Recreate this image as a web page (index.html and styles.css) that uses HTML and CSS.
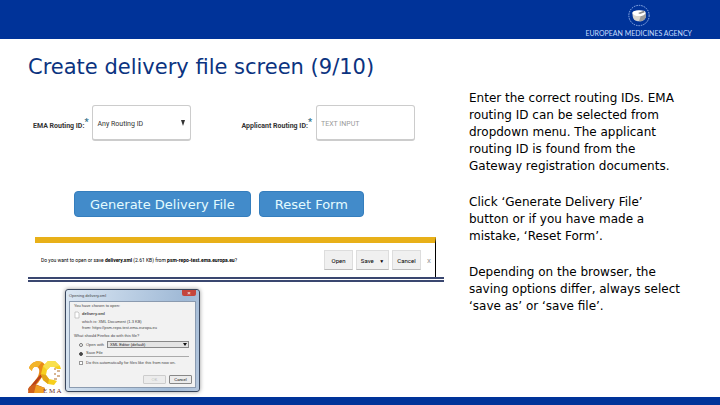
FILE: index.html
```html
<!DOCTYPE html>
<html lang="en">
  <head>
    <meta charset="UTF-8" />
    <meta name="viewport" content="width=device-width, initial-scale=1.0" />
    <title>Create delivery file screen</title>
    <link rel="stylesheet" href="styles.css">
  </head>
  <body>
    <header class="topbar">
      <div class="agency">
        <svg class="agency-mark" viewBox="0 0 24 24" aria-hidden="true">
          <circle cx="12" cy="12" r="10.6" fill="none" stroke="#a9c4f5" stroke-width="0.9" stroke-dasharray="1.6 1" />
          <path d="M5 9 C6 7 9 7 12 7 L17 7 C19 7 19 9 19 11 L19 14 C18 17 15 18 12 18 C9 18 6 17 5.500 13 Z" fill="#d9d6d0" />
          <path d="M14 12 L19 10 L19 14 C18 17 15 18 12 18 Z" fill="#9c9c9c" />
          <ellipse cx="12" cy="9.500" rx="6.800" ry="3" fill="#fff" />
          <path d="M11 9.500 L17 7 L18 8.500 L13 10.500 Z" fill="#8d8d8d" />
        </svg>
        <span class="agency-name">EUROPEAN MEDICINES AGENCY</span>
      </div>
    </header>

    <h1>Create delivery file screen (9/10)</h1>

    <main>
      <div class="shots">
        <form class="routing">
          <div class="field">
            <label for="emaRouting">EMA Routing ID:<span class="required">*</span></label>
            <select id="emaRouting">
              <option>Any Routing ID</option>
            </select>
          </div>
          <div class="field">
            <label for="applicantRouting">Applicant Routing ID:<span class="required">*</span></label>
            <input type="text" id="applicantRouting" placeholder="TEXT INPUT" />
          </div>
        </form>

        <div class="actions">
          <button type="button">Generate Delivery File</button>
          <button type="button">Reset Form</button>
        </div>

        <div class="download">
          <div class="download-bar">
            <p>Do you want to open or save <b>delivery.xml</b> (2.61 KB) from <b>psm-repo-test.ema.europa.eu</b>?</p>
            <button type="button">Open</button>
            <button type="button" class="save">Save <span>▼</span></button>
            <button type="button">Cancel</button>
            <button type="button" class="dismiss" aria-label="Close">x</button>
          </div>
        </div>

        <div class="bottom">
          <svg class="anniversary" viewBox="0 0 36 34" role="img" aria-label="20 years EMA">
            <path d="M1 8 C3 2 9 0 14 2 C18 4 19 9 16 14 L10 23 L3 29 L1 28 L9 18 C12 13 12 8 9 7 C6 6 4 8 4 11 Z" fill="#e98a17" />
            <path d="M1 8 C3 2 9 0 14 2 L10 7 C6 6 4 8 4 11 Z" fill="#f3b52b" />
            <path d="M12 15 L16 14 L7 25 L1 32 L0 29 Z" fill="#b8421c" />
            <path d="M1 27 L7 24 L17 28 L15 33 L0 33 Z" fill="#d0611b" />
            <path d="M8 25 L17 28 L15 33 L6 33 Z" fill="#f0a024" />
            <path fill-rule="evenodd" d="M20 1 L27 1 L32 6 L33 9 L29 9 L26 7 L22 7 L19 10 L18 15 L21 19 L26 20 L29 21 L26 25 L20 24 L15 20 L13 14 L15 6 Z" fill="#f7cf1d" />
            <path d="M20 1 L27 1 L32 6 L26 7 L22 7 L19 10 L15 6 Z" fill="#f9e04e" />
            <path d="M13 14 L18 15 L21 19 L20 24 L15 20 Z" fill="#e2a417" />
            <path d="M26 9 h2 M29 11 h3 M26 14 h2 M29 16 h3 M26 19 h3" stroke="#b06a22" stroke-width="1" />
            <text x="15" y="33" class="anniversary-text">E M A</text>
          </svg>

          <form class="dialog">
            <div class="dialog-title">
              <span>Opening delivery.xml</span>
              <button type="button" class="close" aria-label="Close">×</button>
            </div>
            <div class="dialog-body">
              <p>You have chosen to open:</p>
              <div class="file">
                <svg viewBox="0 0 6 8" aria-hidden="true"><path d="M1 1 h3 l1 1 v5 h-4 z" fill="#fff" stroke="#aaa" stroke-width="0.6" /></svg>
                <div>
                  <p><b>delivery.xml</b></p>
                  <p class="kind">which is: XML Document (1.3 KB)</p>
                  <p>from: https://psm-repo-test.ema.europa.eu</p>
                </div>
              </div>
              <p>What should Firefox do with this file?</p>
              <div class="choice">
                <input type="radio" name="handler" id="openWith" />
                <label for="openWith">Open with</label>
                <select aria-label="Application">
                  <option>XML Editor (default)</option>
                </select>
              </div>
              <div class="choice">
                <input type="radio" name="handler" id="saveFile" checked />
                <label for="saveFile" class="picked">Save File</label>
              </div>
              <div class="choice">
                <input type="checkbox" id="remember" />
                <label for="remember">Do this automatically for files like this from now on.</label>
              </div>
              <div class="dialog-buttons">
                <button type="button" disabled>OK</button>
                <button type="button">Cancel</button>
              </div>
            </div>
          </form>
        </div>
      </div>

      <div class="notes">
        <p>Enter the correct routing IDs. EMA routing ID can be selected from dropdown menu. The applicant routing ID is found from the Gateway registration documents.</p>
        <p>Click ‘Generate Delivery File’ button or if you have made a mistake, ‘Reset Form’.</p>
        <p>Depending on the browser, the saving options differ, always select ‘save as’ or ‘save file’.</p>
      </div>
    </main>

    <footer></footer>
  </body>
</html>
```

FILE: styles.css
```css
* {
  box-sizing: border-box;
}
body {
  display: flex;
  flex-direction: column;
  min-height: 100vh;
  margin: 0;
  background: #fff;
  color: #000;
  font-family: "DejaVu Sans", Verdana, sans-serif;
}
p {
  margin: 0;
}
button,
input,
select {
  font-family: inherit;
  margin: 0;
}

/* header */
.topbar {
  display: flex;
  justify-content: flex-end;
  padding: 4px 28px 0;
  height: 39px;
  background: #003399;
}
.agency {
  display: flex;
  flex-direction: column;
  align-items: center;
}
.agency-mark {
  width: 24px;
  height: 24px;
}
.agency-name {
  color: #c5dcff;
  font-family: Lato, sans-serif;
  font-size: 7px;
  line-height: 12px;
}
h1 {
  margin: 16px 28px 11px;
  color: #0b3380;
  font-size: 21px;
  font-weight: normal;
  line-height: 24px;
}

main {
  display: grid;
  grid-template-columns: minmax(0, 1fr) 223px;
  gap: 25px;
  flex: 1;
  padding: 0 28px;
}
.notes {
  padding-right: 7px;
  font-size: 12px;
  line-height: 17px;
}
.notes p + p {
  margin-top: 19px;
}

/* routing form */
.routing {
  display: flex;
  justify-content: space-between;
  padding: 15px 29px 0 5px;
}
.field {
  display: flex;
  align-items: center;
  gap: 4px;
  color: #333;
  font-family: Roboto, sans-serif;
}
.field label {
  font-size: 7px;
  font-weight: bold;
  white-space: nowrap;
}
.required {
  color: #2f7089;
  font-size: 9px;
  vertical-align: 3px;
}
.field select,
.field input {
  width: 99px;
  height: 36px;
  padding: 2px 4px 0;
  border: 1px solid #ccc;
  border-bottom-width: 2px;
  border-radius: 3px;
  background: #fff;
  color: #333;
  font-size: 7px;
}
.field select {
  appearance: none;
  background: url("data:image/svg+xml,%3Csvg xmlns='http://www.w3.org/2000/svg' viewBox='0 0 4 6'%3E%3Cpath d='M0 0h4L2 6z' fill='%23333'/%3E%3C/svg%3E") no-repeat right 5px center / 4px 6px;
}
.field input::placeholder {
  color: #999;
}

.actions {
  display: flex;
  gap: 8px;
  padding: 50px 0 20px 46px;
}
.actions button {
  height: 26px;
  padding: 0 15px;
  border: 1px solid #357ebd;
  border-radius: 4px;
  background: #428bca;
  color: #e4fbff;
  font-size: 13px;
}

/* browser download prompt */
.download {
  border-bottom: 5px double #3a4770;
  padding: 0 8px 0 7px;
}
.download-bar {
  display: flex;
  align-items: center;
  gap: 3px;
  height: 40px;
  border-top: 6px solid #e8b018;
  border-right: 1px solid #000;
  padding: 0 1px 0 6px;
  font-family: Roboto, sans-serif;
  font-size: 5px;
}
.download-bar p {
  flex: 1;
  white-space: nowrap;
}
.download-bar button {
  width: 29px;
  height: 20px;
  padding: 0;
  border: 1px solid #ddd;
  border-bottom-color: #bbb;
  background: #f0f0f0;
  font-size: 6px;
}
.download-bar .save {
  width: 33px;
}
.save span {
  margin-left: 4px;
  font-size: 5px;
}
.download-bar .dismiss {
  width: 10px;
  border: 0;
  background: none;
  color: #999;
  font-size: 8px;
}

/* file dialog */
.bottom {
  display: flex;
  align-items: flex-end;
  gap: 1px;
  padding-top: 7px;
}
.anniversary {
  width: 36px;
  height: 34px;
}
.anniversary-text {
  fill: #6b2a1c;
  font-family: "Liberation Serif", serif;
  font-size: 7px;
}
.dialog {
  width: 135px;
  margin-bottom: 2px;
  padding: 0 3px 3px;
  border: 1px solid #39465c;
  border-radius: 3px;
  background: linear-gradient(100deg, #dbe7f3, #9fb9d6 80%, #b4c6dc);
  box-shadow: 0 0 4px rgba(0, 0, 0, 0.4);
  color: #444;
  font-family: "Liberation Sans", sans-serif;
  font-size: 4px;
  line-height: 6px;
}
.dialog-title {
  display: flex;
  justify-content: space-between;
  height: 11px;
  line-height: 11px;
}
.dialog-title .close {
  width: 14px;
  height: 6px;
  padding: 0;
  border: 0;
  border-radius: 0 0 2px 2px;
  background: #c4453c;
  color: #fff;
  font-size: 6px;
  line-height: 6px;
}
.dialog-body {
  display: flex;
  flex-direction: column;
  gap: 2px;
  padding: 1px 3px 3px 4px;
  border: 1px solid #8b9bb0;
  background: #f2f2f2;
}
.file {
  display: flex;
  gap: 2px;
}
.file svg {
  width: 6px;
  height: 8px;
}
.file .kind {
  margin-top: 2px;
}
.choice {
  display: flex;
  align-items: center;
  gap: 3px;
  height: 7px;
  padding-left: 5px;
}
.choice input {
  width: 4px;
  height: 4px;
  accent-color: #444;
}
.choice input[type="checkbox"] {
  appearance: none;
  border: 1px solid #999;
  background: #fff;
}
.choice select {
  appearance: none;
  flex: 1;
  height: 7px;
  margin-right: 3px;
  padding: 0 2px;
  border: 1px solid #888;
  background: url("data:image/svg+xml,%3Csvg xmlns='http://www.w3.org/2000/svg' viewBox='0 0 4 3'%3E%3Cpath d='M0 0h4L2 3z' fill='%23111'/%3E%3C/svg%3E") no-repeat right 1px center / 4px 3px #e4e4e4;
  color: #222;
  font-size: 4px;
}
.choice .picked {
  flex: 1;
  margin-right: 3px;
  border-bottom: 1px solid #aaa;
}
.dialog-buttons {
  display: flex;
  justify-content: flex-end;
  gap: 3px;
  padding-top: 7px;
}
.dialog-buttons button {
  width: 23px;
  height: 9px;
  padding: 0;
  border: 1px solid #888;
  border-radius: 1px;
  background: #ececec;
  font-size: 4px;
  line-height: 7px;
}
.dialog-buttons button:disabled {
  border-color: #ccc;
}

footer {
  height: 8px;
  background: #003399;
}
```
